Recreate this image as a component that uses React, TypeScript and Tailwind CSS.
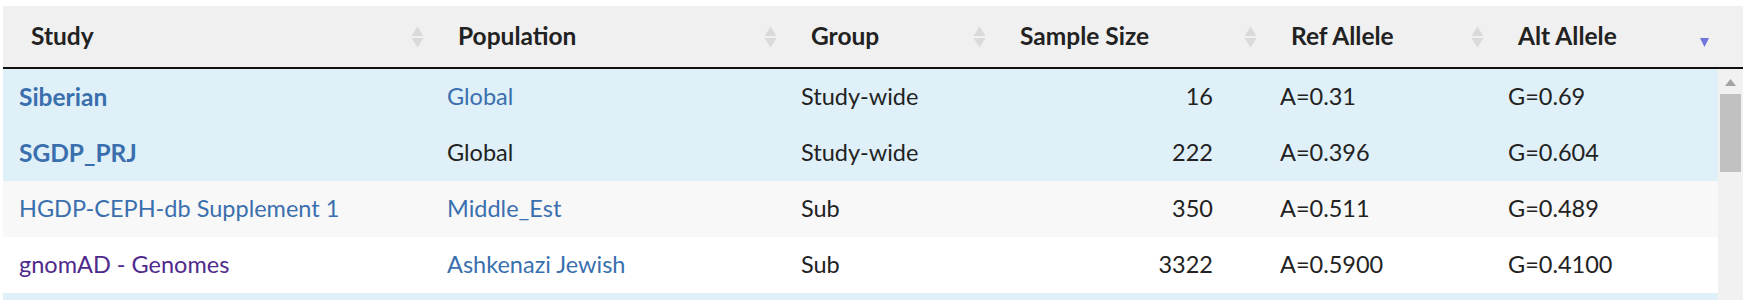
import React from "react";

interface Row {
  study: string;
  studyStyle: "bold" | "link" | "visited";
  population: string;
  popLink: boolean;
  group: string;
  size: string;
  ref: string;
  alt: string;
  bg: string;
}

const rows: Row[] = [
  { study: "Siberian", studyStyle: "bold", population: "Global", popLink: true, group: "Study-wide", size: "16", ref: "A=0.31", alt: "G=0.69", bg: "bg-[#e0f0f8]" },
  { study: "SGDP_PRJ", studyStyle: "bold", population: "Global", popLink: false, group: "Study-wide", size: "222", ref: "A=0.396", alt: "G=0.604", bg: "bg-[#e0f0f8]" },
  { study: "HGDP-CEPH-db Supplement 1", studyStyle: "link", population: "Middle_Est", popLink: true, group: "Sub", size: "350", ref: "A=0.511", alt: "G=0.489", bg: "bg-[#f8f8f8]" },
  { study: "gnomAD - Genomes", studyStyle: "visited", population: "Ashkenazi Jewish", popLink: true, group: "Sub", size: "3322", ref: "A=0.5900", alt: "G=0.4100", bg: "bg-white" },
];

const SortIcon = ({ active }: { active?: boolean }) => (
  <svg width="13" height="22" viewBox="0 0 13 22" className="shrink-0">
    {!active && <polygon points="0.5,10 6.5,0.5 12.5,10" fill="#dadada" />}
    <polygon
      points={active ? "2,12 11,12 6.5,21" : "0.5,12 12.5,12 6.5,21.5"}
      fill={active ? "#7276dc" : "#dadada"}
    />
  </svg>
);

const HeaderCell = ({
  label,
  width,
  active,
  last,
}: {
  label: string;
  width: string;
  active?: boolean;
  last?: boolean;
}) => (
  <div className={`${width} flex items-center justify-between pl-[28px] ${last ? "pr-[32px]" : "pr-[6px]"}`}>
    <span className="text-[24.5px] font-bold">{label}</span>
    <SortIcon active={active} />
  </div>
);

const App = () => {
  return (
    <div
      className="h-[300px] overflow-hidden bg-white pt-[6px] pl-[3px] text-[23.5px] text-[#222]"
      style={{ fontFamily: "Lato, 'Open Sans', sans-serif" }}
    >
      <div className="w-[1740px]">
        {/* header */}
        <div className="flex h-[63px] bg-[#f0f0f0] border-b-2 border-[#111]">
          <HeaderCell label="Study" width="w-[427px]" />
          <HeaderCell label="Population" width="w-[353px]" />
          <HeaderCell label="Group" width="w-[209px]" />
          <HeaderCell label="Sample Size" width="w-[271px]" />
          <HeaderCell label="Ref Allele" width="w-[227px]" />
          <HeaderCell label="Alt Allele" width="w-[253px]" active last />
        </div>

        {/* body */}
        <div className="flex h-[231px]">
          <div className="flex-1">
            {rows.map((r, i) => (
              <div key={i} className={`flex h-[56px] items-center ${r.bg}`}>
                <div className="w-[427px] pl-[16px]">
                  <span
                    className={
                      r.studyStyle === "bold"
                        ? "text-[24.5px] font-bold text-[#3a6fae]"
                        : r.studyStyle === "link"
                        ? "text-[#3a6fae]"
                        : "text-[#4f2a8c]"
                    }
                  >
                    {r.study}
                  </span>
                </div>
                <div className="w-[353px] pl-[17px]">
                  <span className={r.popLink ? "text-[#3a6fae]" : ""}>{r.population}</span>
                </div>
                <div className="w-[209px] pl-[18px]">{r.group}</div>
                <div className="w-[271px] pr-[50px] text-right">{r.size}</div>
                <div className="w-[227px] pl-[17px]">{r.ref}</div>
                <div className="w-[227px] pl-[18px]">{r.alt}</div>
              </div>
            ))}
            <div className="h-[56px] bg-[#e0f0f8]" />
          </div>

          {/* scrollbar */}
          <div className="flex w-[25px] flex-col items-center bg-[#f1f1f1]">
            <svg width="11" height="7" viewBox="0 0 11 7" className="mt-[10px]">
              <polygon points="0,7 5.5,0 11,7" fill="#a3a3a3" />
            </svg>
            <div className="mt-[8px] h-[78px] w-[21px] bg-[#c1c1c1]" />
          </div>
        </div>
      </div>
    </div>
  );
};

export default App;
